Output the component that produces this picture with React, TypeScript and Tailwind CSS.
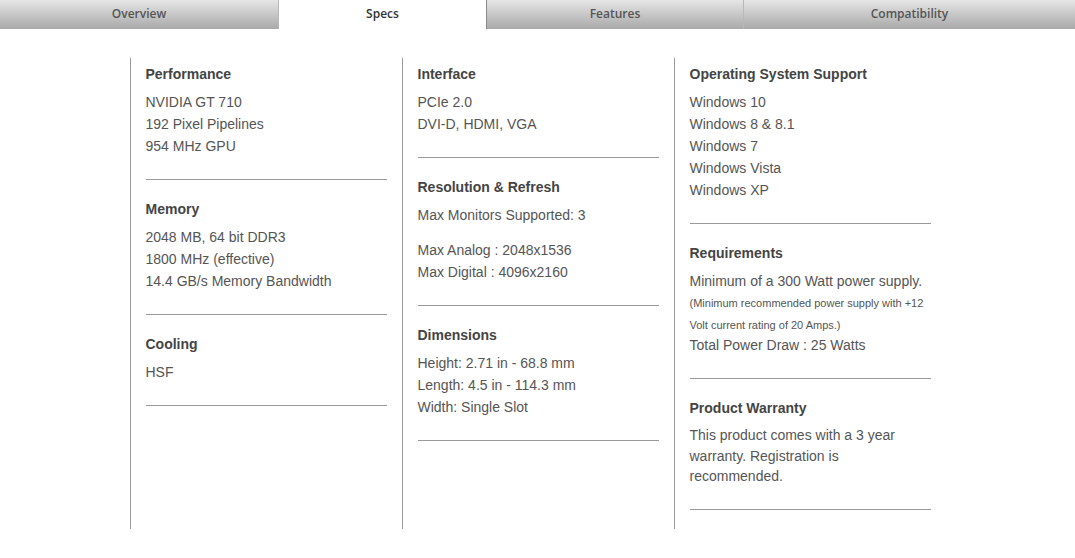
import React from "react";

type Section = {
  title: string;
  body: React.ReactNode;
  first?: boolean;
};

const tabs = [
  { label: "Overview", width: "w-[279px]" },
  { label: "Specs", width: "w-[208px]", active: true },
  { label: "Features", width: "w-[257px]" },
  { label: "Compatibility", width: "flex-1" },
];

function Lines({ items }: { items: string[] }) {
  return (
    <ul className="leading-[22px]">
      {items.map((item) => (
        <li key={item}>{item}</li>
      ))}
    </ul>
  );
}

const columns: Section[][] = [
  [
    { title: "Performance", first: true, body: <Lines items={["NVIDIA GT 710", "192 Pixel Pipelines", "954 MHz GPU"]} /> },
    { title: "Memory", body: <Lines items={["2048 MB, 64 bit DDR3", "1800 MHz (effective)", "14.4 GB/s Memory Bandwidth"]} /> },
    { title: "Cooling", body: <Lines items={["HSF"]} /> },
  ],
  [
    { title: "Interface", first: true, body: <Lines items={["PCIe 2.0", "DVI-D, HDMI, VGA"]} /> },
    {
      title: "Resolution & Refresh",
      body: (
        <>
          <Lines items={["Max Monitors Supported: 3"]} />
          <div className="mt-[13px]">
            <Lines items={["Max Analog : 2048x1536", "Max Digital : 4096x2160"]} />
          </div>
        </>
      ),
    },
    { title: "Dimensions", body: <Lines items={["Height: 2.71 in - 68.8 mm", "Length: 4.5 in - 114.3 mm", "Width: Single Slot"]} /> },
  ],
  [
    {
      title: "Operating System Support",
      first: true,
      body: <Lines items={["Windows 10", "Windows 8 & 8.1", "Windows 7", "Windows Vista", "Windows XP"]} />,
    },
    {
      title: "Requirements",
      body: (
        <>
          <p className="leading-[22px]">Minimum of a 300 Watt power supply.</p>
          <p className="text-[11px] leading-[22px]">
            (Minimum recommended power supply with +12 Volt current rating of 20 Amps.)
          </p>
          <p className="-mt-[2px] leading-[22px]">Total Power Draw : 25 Watts</p>
        </>
      ),
    },
    {
      title: "Product Warranty",
      body: <p className="leading-[20.5px]">This product comes with a 3 year warranty. Registration is recommended.</p>,
    },
  ],
];

export default function App() {
  return (
    <div className="min-h-[558px] bg-white font-['Liberation_Sans',Arial,sans-serif] text-[14px] text-[#555]">
      <nav className="flex h-[29px] font-['Open_Sans',sans-serif] text-[12px] font-semibold">
        {tabs.map((tab) => (
          <div
            key={tab.label}
            className={
              tab.active
                ? `${tab.width} flex items-center justify-center border-r border-[#8a8a8a] bg-white pb-[1px] text-[#333]`
                : `${tab.width} flex items-center justify-center border-r border-[#b8b8b8] bg-gradient-to-b from-[#e6e6e6] to-[#a9a9a9] pb-[1px] text-[#555] last:border-r-0`
            }
          >
            {tab.label}
          </div>
        ))}
      </nav>

      <div className="mx-auto mt-[29px] grid w-[816px] grid-cols-3">
        {columns.map((sections, i) => (
          <div key={i} className="border-l border-[#999] pr-[15px] pb-[19px] pl-[15px]">
            {sections.map((s) => (
              <section key={s.title} className={`border-b border-[#999] pb-[22px] ${s.first ? "pt-[6px]" : "pt-[19px]"}`}>
                <h3 className="mb-[7px] text-[14px] leading-[20px] font-bold text-[#444]">{s.title}</h3>
                {s.body}
              </section>
            ))}
          </div>
        ))}
      </div>
    </div>
  );
}
